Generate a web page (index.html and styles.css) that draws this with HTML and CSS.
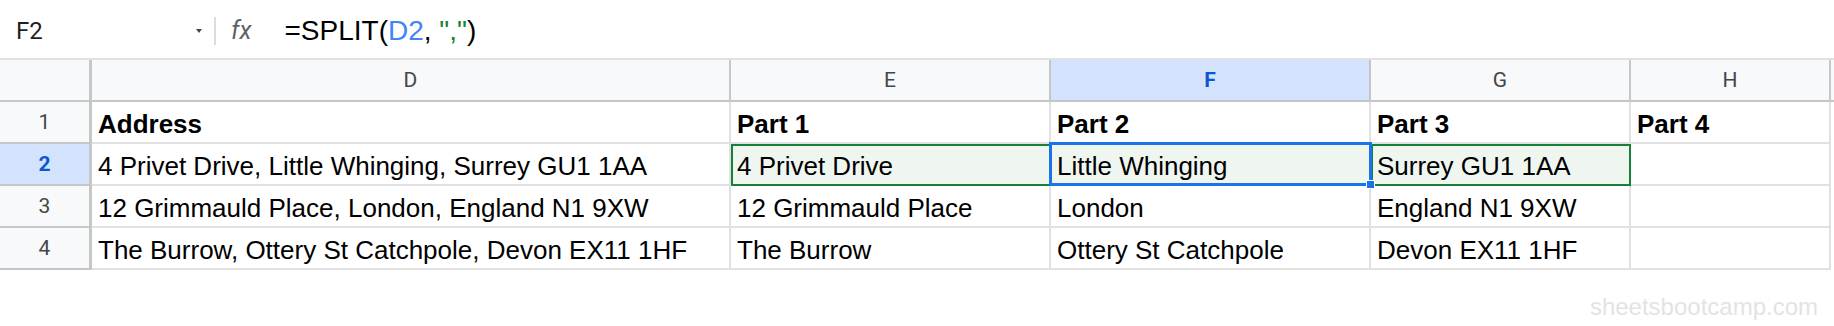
FILE: index.html
```html
<!DOCTYPE html>
<html lang="en">
<head>
    <meta charset="UTF-8">
    <meta name="viewport" content="width=device-width, initial-scale=1.0">
    <title>SPLIT addresses</title>
    <link rel="stylesheet" href="styles.css">
</head>
<body>
    <!-- Formula bar -->
    <div class="formula-bar">
        <div class="name-box">
            <span>F2</span>
            <span class="caret"></span>
        </div>
        <div class="divider"></div>
        <span class="fx">fx</span>
        <div class="formula">=SPLIT(<span class="ref">D2</span>, <span class="str">","</span>)</div>
    </div>

    <!-- Grid -->
    <div class="sheet">
        <div class="corner"></div>
        <div class="col-head">D</div>
        <div class="col-head">E</div>
        <div class="col-head active">F</div>
        <div class="col-head">G</div>
        <div class="col-head">H</div>
        <div class="col-fill head-fill"></div>

        <div class="row-head">1</div>
        <div class="cell bold">Address</div>
        <div class="cell bold">Part 1</div>
        <div class="cell bold">Part 2</div>
        <div class="cell bold">Part 3</div>
        <div class="cell bold">Part 4</div>
        <div class="col-fill"></div>

        <div class="row-head active">2</div>
        <div class="cell">4 Privet Drive, Little Whinging, Surrey GU1 1AA</div>
        <div class="cell spill"><span class="spill-box"></span><span class="txt">4 Privet Drive</span></div>
        <div class="cell selected"><span class="sel-box"><span class="handle"></span></span><span class="txt">Little Whinging</span></div>
        <div class="cell spill"><span class="spill-box"></span><span class="txt">Surrey GU1 1AA</span></div>
        <div class="cell"></div>
        <div class="col-fill"></div>

        <div class="row-head">3</div>
        <div class="cell">12 Grimmauld Place, London, England N1 9XW</div>
        <div class="cell">12 Grimmauld Place</div>
        <div class="cell">London</div>
        <div class="cell">England N1 9XW</div>
        <div class="cell"></div>
        <div class="col-fill"></div>

        <div class="row-head">4</div>
        <div class="cell">The Burrow, Ottery St Catchpole, Devon EX11 1HF</div>
        <div class="cell">The Burrow</div>
        <div class="cell">Ottery St Catchpole</div>
        <div class="cell">Devon EX11 1HF</div>
        <div class="cell"></div>
        <div class="col-fill"></div>
    </div>

    <div class="watermark">sheetsbootcamp.com</div>
</body>
</html>
```

FILE: styles.css
```css
/* Page */
body {
    margin: 0;
    padding: 0;
    background-color: #fff;
    font-family: "Liberation Sans", Arial, sans-serif;
    color: #000;
    position: relative;
    height: 326px;
    overflow: hidden;
}

/* Formula bar */
.formula-bar {
    display: flex;
    align-items: center;
    height: 60px;
    padding-top: 3px;
    box-sizing: border-box;
    border-bottom: 2px solid #e1e1e1;
}

.name-box {
    display: flex;
    align-items: center;
    justify-content: space-between;
    width: 186px;
    padding-left: 16px;
    padding-right: 12px;
    font-family: Roboto, "Liberation Sans", sans-serif;
    font-size: 24px;
    color: #1f1f1f;
}

.caret {
    width: 0;
    height: 0;
    border-left: 3px solid transparent;
    border-right: 3px solid transparent;
    border-top: 4px solid #444746;
}

.divider {
    width: 2px;
    height: 28px;
    background-color: #dadce0;
}

.fx {
    margin-left: 15px;
    font-family: Roboto, sans-serif;
    font-style: italic;
    font-size: 25px;
    color: #5f6368;
}

.formula {
    margin-left: 33px;
    font-size: 28px;
    color: #000;
}

.formula .ref {
    color: #4285f4;
}

.formula .str {
    color: #188038;
}

/* Sheet grid */
.sheet {
    display: grid;
    grid-template-columns: 92px 639px 320px 320px 260px 200px 1fr;
    grid-auto-rows: 42px;
}

.corner,
.col-head,
.row-head {
    background-color: #f8f9fa;
    box-sizing: border-box;
    border-right: 2px solid #c4c7c5;
    border-bottom: 2px solid #c4c7c5;
    font-family: Roboto, "Liberation Sans", sans-serif;
    font-size: 21px;
    color: #444746;
    display: flex;
    align-items: center;
    justify-content: center;
}

.corner,
.row-head {
    border-right-width: 3px;
}

.col-head.active,
.row-head.active {
    background-color: #d3e3fd;
    color: #0b57d0;
    font-weight: bold;
}

.head-fill {
    background-color: #f8f9fa;
    border-bottom: 2px solid #c4c7c5;
}

.cell {
    position: relative;
    box-sizing: border-box;
    border-right: 2px solid #e1e1e1;
    border-bottom: 2px solid #e1e1e1;
    padding: 0 6px 3px;
    font-size: 26px;
    line-height: 30px;
    display: flex;
    align-items: flex-end;
    white-space: nowrap;
}

.cell.bold {
    font-weight: bold;
}

.cell .txt {
    position: relative;
}

/* SPLIT result cells */
.spill-box {
    position: absolute;
    top: 0;
    left: 0;
    right: -2px;
    bottom: -2px;
    border: 2px solid #188038;
    background-color: #eff6f0;
}

/* Active cell */
.sel-box {
    position: absolute;
    top: -2px;
    left: -2px;
    right: -3px;
    bottom: -2px;
    border: 3px solid #1a73e8;
    background-color: #eff6f0;
    z-index: 2;
}

.selected .txt {
    z-index: 3;
}

.handle {
    position: absolute;
    right: -6px;
    bottom: -6px;
    width: 7px;
    height: 7px;
    background-color: #1a73e8;
    border: 1px solid #fff;
}

/* Watermark */
.watermark {
    position: absolute;
    right: 16px;
    bottom: 5px;
    font-size: 24px;
    color: #e3e3e3;
}
```
